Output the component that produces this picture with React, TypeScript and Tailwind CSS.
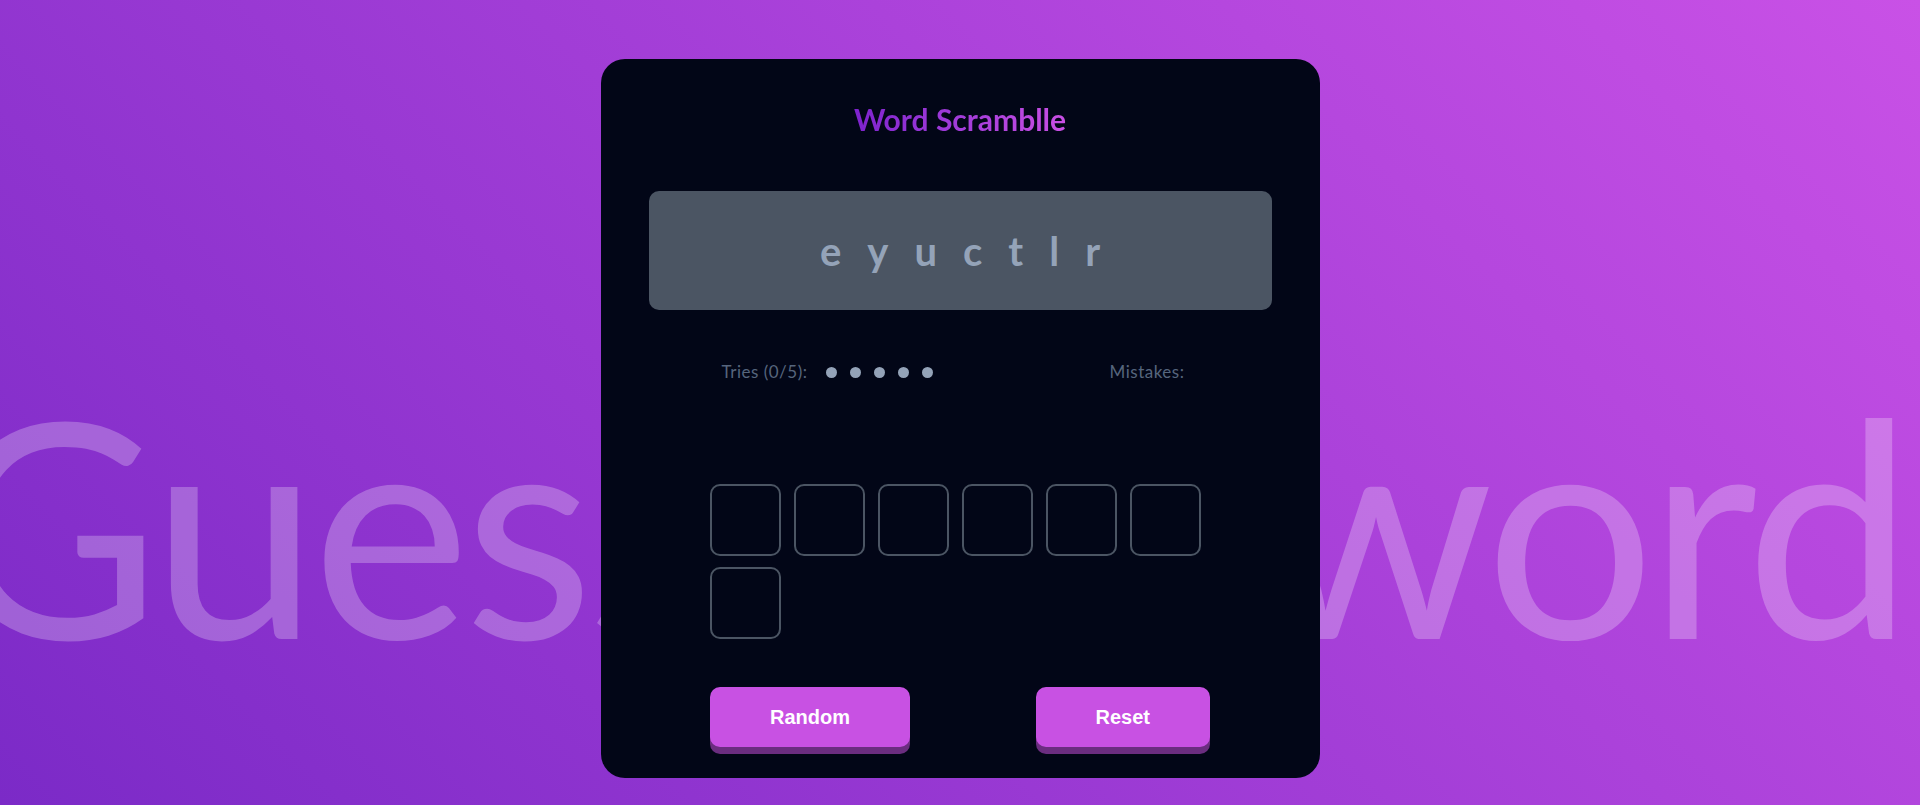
import React from "react";

const letters = ["e", "y", "u", "c", "t", "l", "r"];

export default function App() {
  return (
    <div className="relative h-screen w-full overflow-hidden bg-[linear-gradient(45deg,#7b2ac7,#c951e6)] font-['Lato','Noto_Sans',sans-serif]">
      <div className="pointer-events-none absolute inset-x-0 top-[373px] flex justify-center whitespace-nowrap select-none">
        <span className="-translate-x-[36px] text-[300px] font-normal leading-none tracking-[-0.022em] text-white/25">
          Guess the word
        </span>
      </div>

      <div className="relative flex justify-center pt-[59px]">
        <div className="flex w-[719px] flex-col items-center rounded-3xl bg-[#020617] px-12 pt-[42px] pb-[31px]">
          <h1 className="bg-linear-to-r from-[#7e22ce] to-[#c94fe4] bg-clip-text text-[30px] font-bold leading-[36px] text-transparent">
            Word Scramblle
          </h1>

          <div className="mt-[54px] flex h-[119px] w-full items-center justify-center gap-[26px] rounded-[10px] bg-[#4b5563] text-[40px] font-bold text-[#94a3b8]">
            {letters.map((l, i) => (
              <span key={i}>{l}</span>
            ))}
          </div>

          <div className="mt-[50px] flex h-6 w-full items-center justify-between pl-[73px] pr-[87px] text-[17px] tracking-[0.03em] text-[#56657d]">
            <div className="flex items-center">
              <span>Tries (0/5):</span>
              <div className="ml-[19px] flex gap-[13px]">
                {[0, 1, 2, 3, 4].map((i) => (
                  <span key={i} className="h-[11px] w-[11px] rounded-full bg-[#94a3b8]" />
                ))}
              </div>
            </div>
            <span>Mistakes:</span>
          </div>

          <div className="mt-[100px] flex w-[500px] flex-wrap gap-x-[13px] gap-y-[11px]">
            {letters.map((_, i) => (
              <div key={i} className="h-[72px] w-[71px] rounded-[10px] border-2 border-[#4b5563]" />
            ))}
          </div>

          <div className="mt-[48px] flex w-[500px] justify-between font-['Liberation_Sans',Arial,sans-serif]">
            <button className="rounded-[10px] bg-[#c851e3] px-[60px] py-4 text-xl leading-7 font-bold text-white shadow-[0_7px_0_#6b2d80]">
              Random
            </button>
            <button className="rounded-[10px] bg-[#c851e3] px-[60px] py-4 text-xl leading-7 font-bold text-white shadow-[0_7px_0_#6b2d80]">
              Reset
            </button>
          </div>
        </div>
      </div>
    </div>
  );
}
